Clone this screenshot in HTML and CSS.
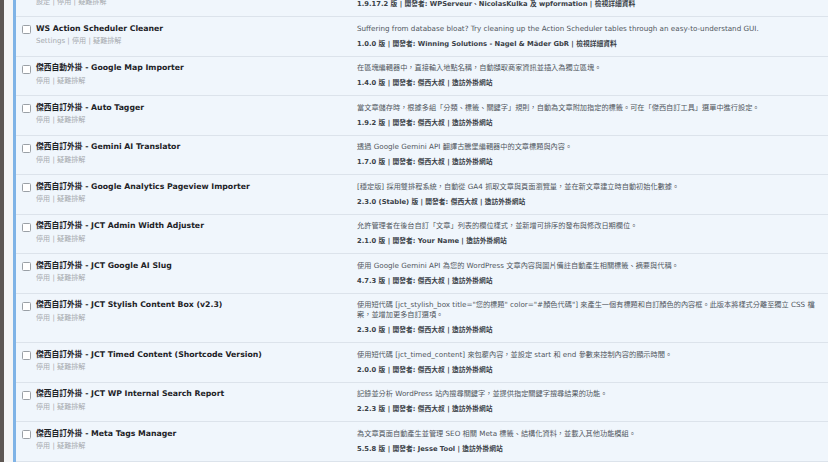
FILE: index.html
```html
<!DOCTYPE html>
<html lang="zh-Hant">
<head>
<meta charset="utf-8">
<title>外掛</title>
<link rel="stylesheet" href="styles.css">
</head>
<body>
<div class="page">
  <div class="edge"></div>
  <div class="gutter"></div>
  <div class="viewport">
    <div class="list">
      <div class="row first">
        <div class="check"><span class="box"></span></div>
        <div class="plugin">
          <div class="title">WP-Optimize</div>
          <div class="actions">設定 | 停用 | 疑難排解</div>
        </div>
        <div class="desc">
          <div class="text">Cleans database.</div>
          <div class="meta">1.9.17.2 版 | 開發者: WPServeur、NicolasKulka 及 wpformation | 檢視詳細資料</div>
        </div>
      </div>

      <div class="row">
        <div class="check"><span class="box"></span></div>
        <div class="plugin">
          <div class="title">WS Action Scheduler Cleaner</div>
          <div class="actions">Settings | 停用 | 疑難排解</div>
        </div>
        <div class="desc">
          <div class="text">Suffering from database bloat? Try cleaning up the Action Scheduler tables through an easy-to-understand GUI.</div>
          <div class="meta">1.0.0 版 | 開發者: Winning Solutions - Nagel &amp; Mäder GbR | 檢視詳細資料</div>
        </div>
      </div>

      <div class="row">
        <div class="check"><span class="box"></span></div>
        <div class="plugin">
          <div class="title">傑西自動外掛 - Google Map Importer</div>
          <div class="actions">停用 | 疑難排解</div>
        </div>
        <div class="desc">
          <div class="text">在區塊編輯器中，直接輸入地點名稱，自動擷取商家資訊並插入為獨立區塊。</div>
          <div class="meta">1.4.0 版 | 開發者: 傑西大叔 | 造訪外掛網站</div>
        </div>
      </div>

      <div class="row">
        <div class="check"><span class="box"></span></div>
        <div class="plugin">
          <div class="title">傑西自訂外掛 - Auto Tagger</div>
          <div class="actions">停用 | 疑難排解</div>
        </div>
        <div class="desc">
          <div class="text">當文章儲存時，根據多組「分類、標籤、關鍵字」規則，自動為文章附加指定的標籤。可在「傑西自訂工具」選單中進行設定。</div>
          <div class="meta">1.9.2 版 | 開發者: 傑西大叔 | 造訪外掛網站</div>
        </div>
      </div>

      <div class="row">
        <div class="check"><span class="box"></span></div>
        <div class="plugin">
          <div class="title">傑西自訂外掛 - Gemini AI Translator</div>
          <div class="actions">停用 | 疑難排解</div>
        </div>
        <div class="desc">
          <div class="text">透過 Google Gemini API 翻譯古騰堡編輯器中的文章標題與內容。</div>
          <div class="meta">1.7.0 版 | 開發者: 傑西大叔 | 造訪外掛網站</div>
        </div>
      </div>

      <div class="row">
        <div class="check"><span class="box"></span></div>
        <div class="plugin">
          <div class="title">傑西自訂外掛 - Google Analytics Pageview Importer</div>
          <div class="actions">停用 | 疑難排解</div>
        </div>
        <div class="desc">
          <div class="text">[穩定版] 採用雙排程系統，自動從 GA4 抓取文章與頁面瀏覽量，並在新文章建立時自動初始化數據。</div>
          <div class="meta">2.3.0 (Stable) 版 | 開發者: 傑西大叔 | 造訪外掛網站</div>
        </div>
      </div>

      <div class="row">
        <div class="check"><span class="box"></span></div>
        <div class="plugin">
          <div class="title">傑西自訂外掛 - JCT Admin Width Adjuster</div>
          <div class="actions">停用 | 疑難排解</div>
        </div>
        <div class="desc">
          <div class="text">允許管理者在後台自訂「文章」列表的欄位樣式，並新增可排序的發布與修改日期欄位。</div>
          <div class="meta">2.1.0 版 | 開發者: Your Name | 造訪外掛網站</div>
        </div>
      </div>

      <div class="row">
        <div class="check"><span class="box"></span></div>
        <div class="plugin">
          <div class="title">傑西自訂外掛 - JCT Google AI Slug</div>
          <div class="actions">停用 | 疑難排解</div>
        </div>
        <div class="desc">
          <div class="text">使用 Google Gemini API 為您的 WordPress 文章內容與圖片備註自動產生相關標籤、摘要與代稱。</div>
          <div class="meta">4.7.3 版 | 開發者: 傑西大叔 | 造訪外掛網站</div>
        </div>
      </div>

      <div class="row">
        <div class="check"><span class="box"></span></div>
        <div class="plugin">
          <div class="title">傑西自訂外掛 - JCT Stylish Content Box (v2.3)</div>
          <div class="actions">停用 | 疑難排解</div>
        </div>
        <div class="desc">
          <div class="text">使用短代碼 [jct_stylish_box title="您的標題" color="#顏色代碼"] 來產生一個有標題和自訂顏色的內容框。此版本將樣式分離至獨立 CSS 檔案，並增加更多自訂選項。</div>
          <div class="meta">2.3.0 版 | 開發者: 傑西大叔 | 造訪外掛網站</div>
        </div>
      </div>

      <div class="row">
        <div class="check"><span class="box"></span></div>
        <div class="plugin">
          <div class="title">傑西自訂外掛 - JCT Timed Content (Shortcode Version)</div>
          <div class="actions">停用 | 疑難排解</div>
        </div>
        <div class="desc">
          <div class="text">使用短代碼 [jct_timed_content] 來包覆內容，並設定 start 和 end 參數來控制內容的顯示時間。</div>
          <div class="meta">2.0.0 版 | 開發者: 傑西大叔 | 造訪外掛網站</div>
        </div>
      </div>

      <div class="row">
        <div class="check"><span class="box"></span></div>
        <div class="plugin">
          <div class="title">傑西自訂外掛 - JCT WP Internal Search Report</div>
          <div class="actions">停用 | 疑難排解</div>
        </div>
        <div class="desc">
          <div class="text">記錄並分析 WordPress 站內搜尋關鍵字，並提供指定關鍵字搜尋結果的功能。</div>
          <div class="meta">2.2.3 版 | 開發者: 傑西大叔 | 造訪外掛網站</div>
        </div>
      </div>

      <div class="row">
        <div class="check"><span class="box"></span></div>
        <div class="plugin">
          <div class="title">傑西自訂外掛 - Meta Tags Manager</div>
          <div class="actions">停用 | 疑難排解</div>
        </div>
        <div class="desc">
          <div class="text">為文章頁面自動產生並管理 SEO 相關 Meta 標籤、結構化資料，並載入其他功能模組。</div>
          <div class="meta">5.5.8 版 | 開發者: Jesse Tool | 造訪外掛網站</div>
        </div>
      </div>
    </div>
  </div>
</div>
</body>
</html>
```

FILE: styles.css
```css
html, body {
  margin: 0;
  padding: 0;
  height: 100%;
}

body {
  background: #f0f6fc;
  font-family: "DejaVu Sans", "Noto Sans CJK TC", sans-serif;
  color: #3c434a;
  overflow: hidden;
}

.page {
  display: flex;
  height: 462px;
}

.edge {
  width: 3.5px;
  background: #5e5753;
  flex: none;
}

.gutter {
  width: 9px;
  background: #f4f5f6;
  flex: none;
}

.viewport {
  flex: 1;
  overflow: hidden;
  border-left: 3px solid #7fb3e6;
  background: #f0f6fc;
}

.list {
  margin-top: -22.5px;
}

.row {
  display: grid;
  grid-template-columns: 20.5px 321px 1fr;
  border-bottom: 1px solid #dce3eb;
  background: #f0f6fc;
  box-sizing: border-box;
}

.check {
  padding-top: 8px;
  padding-left: 6.5px;
}

.box {
  display: block;
  width: 7px;
  height: 7px;
  border: 0.8px solid #9aa0a6;
  border-radius: 1.5px;
  background: #fff;
}

.plugin {
  padding: 6.5px 8px 0 0;
}

.title {
  font-size: 7.75px;
  line-height: 10px;
  font-weight: bold;
  color: #1d2327;
  white-space: nowrap;
}

.actions {
  margin-top: 2.5px;
  font-size: 7.1px;
  line-height: 10px;
  color: #a7abaf;
}

.desc {
  padding: 6.5px 10px 7px 0;
}

.text {
  font-size: 7.2px;
  line-height: 10px;
  color: #50575e;
}

.meta {
  margin-top: 5px;
  font-size: 6.75px;
  line-height: 10px;
  font-weight: 600;
  color: #3a4147;
}
```
